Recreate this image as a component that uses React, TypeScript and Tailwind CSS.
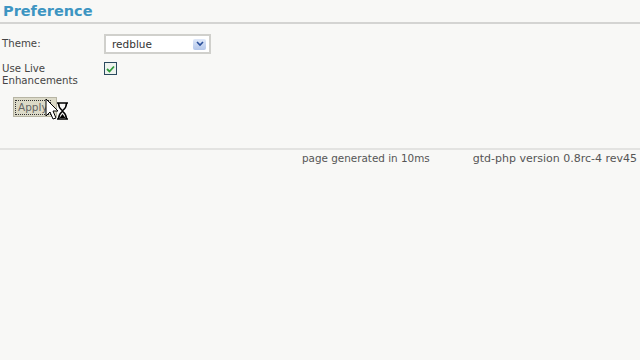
import React from 'react';

const Cursor = () => (
  <svg width="26" height="24" viewBox="0 0 26 24" className="absolute left-[45px] top-[98px]">
    <path d="M1 1 L1 18 L5 14 L8 21 L11 20 L8 13 L13 13 Z" fill="#fff" stroke="#000" strokeWidth="1" />
    <path d="M12 5 H23 M12 21 H23 M13.5 5 C13.5 11 17.5 12 17.5 13 C17.5 14 13.5 15 13.5 21 M21.5 5 C21.5 11 17.5 12 17.5 13 C17.5 14 21.5 15 21.5 21" fill="#fff" stroke="#000" strokeWidth="1.5" />
    <path d="M14.5 20 L17.5 16 L20.5 20 Z" fill="#000" />
  </svg>
);

export default function App() {
  return (
    <div className="relative w-[640px] h-[360px] bg-[#f8f8f6] text-[#444] overflow-hidden" style={{ fontFamily: '"DejaVu Sans", Verdana, sans-serif' }}>
      <h1 className="pl-[3px] pt-[2px] text-[14.5px] leading-[19px] font-bold text-[#3d95c2] border-b-2 border-[#d4d4d2] pb-[1px]">Preference</h1>

      <div className="mt-[10px] flex items-start">
        <div className="w-[104px] pl-[2px] pt-[4px] text-[10.2px] leading-[12px]">Theme:</div>
        <div className="w-[107px] h-[20px] border-2 border-[#d0d0cc] bg-white flex items-center justify-between pl-[6px] pr-[3px]">
          <span className="text-[10.5px] leading-[12px] text-[#333]">redblue</span>
          <span className="w-[13px] h-[11px] rounded-[2px] bg-gradient-to-b from-[#dfe8f8] to-[#b3c6ea] flex items-center justify-center">
            <svg width="8" height="6" viewBox="0 0 8 6"><path d="M1 1 L4 4 L7 1" fill="none" stroke="#2a4f9a" strokeWidth="1.6" /></svg>
          </span>
        </div>
      </div>

      <div className="mt-[9px] flex items-start">
        <div className="w-[104px] pl-[2px] text-[10.2px] leading-[12px]">Use Live<br />Enhancements</div>
        <div className="-mt-[1px] w-[13px] h-[13px] border border-[#2b4a5f] bg-[#eef3ee] flex items-center justify-center">
          <svg width="9" height="8" viewBox="0 0 9 8"><path d="M1 4 L3.5 6.5 L8 1.5" fill="none" stroke="#2f9a3a" strokeWidth="1.8" /></svg>
        </div>
      </div>

      <div className="mt-[10px] pl-[13px]">
        <button className="h-[20px] w-[44px] bg-[#dcdac8] border border-[#b7b5a4] text-[10.5px] text-[#666] flex items-center justify-start pl-[2px]">
          <span className="outline outline-1 outline-dotted outline-[#333] px-[2px] leading-[13px]">Apply</span>
        </button>
      </div>

      <div className="mt-[31px] border-t-2 border-[#e3e3e1] pt-[2px] flex items-baseline whitespace-nowrap leading-[13px] text-[#555]">
        <span className="ml-[302px] text-[10.4px]">page generated in 10ms</span>
        <span className="ml-[43px] text-[11px]">gtd-php version 0.8rc-4 rev45</span>
      </div>

      <Cursor />
    </div>
  );
}
